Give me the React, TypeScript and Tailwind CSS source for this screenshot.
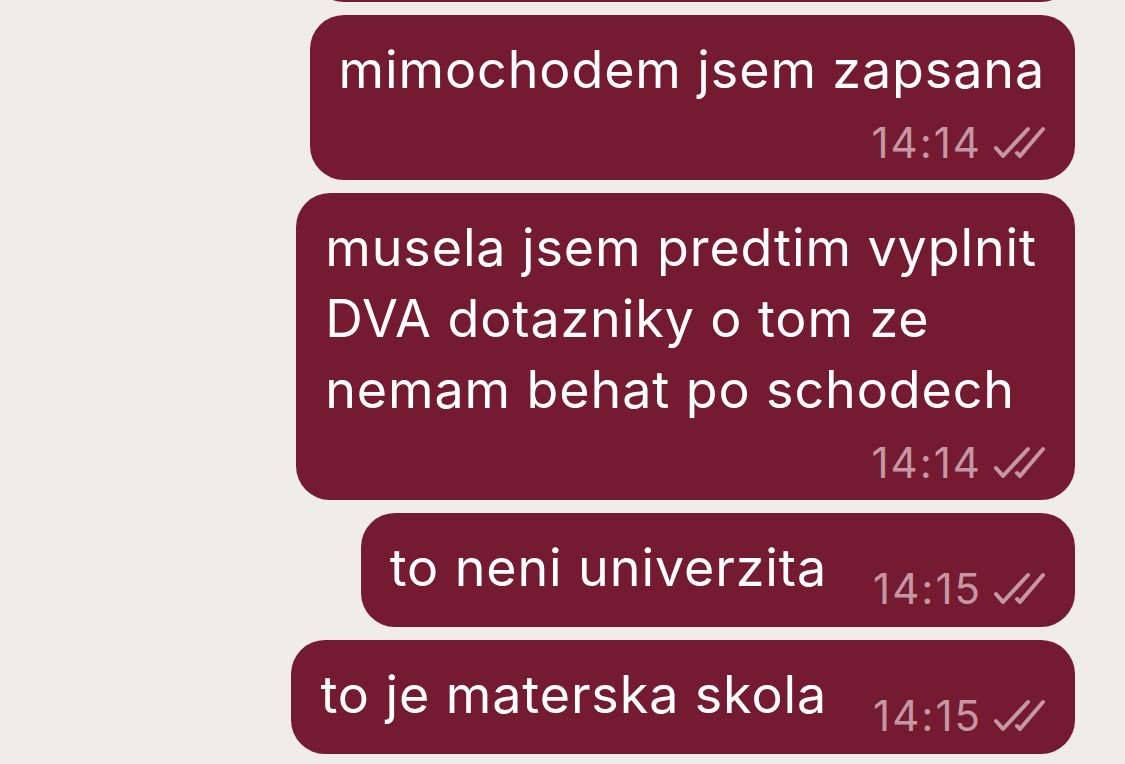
const TEXT_FONT = { fontFamily: "Inter, 'Noto Sans', sans-serif" };

function Checks() {
  return (
    <svg width="54" height="34" viewBox="0 0 54 34" fill="none" className="shrink-0">
      <path d="M5 22 L12 30 L37 3" stroke="currentColor" strokeWidth="4" strokeLinecap="round" strokeLinejoin="round" />
      <path d="M26 27 L29 30 L52 3" stroke="currentColor" strokeWidth="4" strokeLinecap="round" strokeLinejoin="round" />
    </svg>
  );
}

function Time({ t }: { t: string }) {
  return (
    <div className="flex h-[50px] shrink-0 items-center gap-[9px] text-[#c497a3]">
      <span className="text-[42px] leading-none tracking-[2px]">{t}</span>
      <Checks />
    </div>
  );
}

function Stacked({ lines, time, wide }: { lines: string[]; time: string; wide?: boolean }) {
  return (
    <div
      className={
        wide
          ? "flex flex-col rounded-[34px] bg-[#751b31] pl-[29px] pr-[38px] pt-[19px] pb-[12px]"
          : "flex flex-col rounded-[34px] bg-[#751b31] pl-[29px] pr-[30px] pt-[19px] pb-[12px]"
      }
    >
      <div className="text-[52px] leading-[71px] tracking-[0.9px] text-white">
        {lines.map((l) => (
          <div key={l}>{l}</div>
        ))}
      </div>
      <div className={wide ? "mt-[13px] -mr-[8px] self-end" : "mt-[13px] self-end"}>
        <Time t={time} />
      </div>
    </div>
  );
}

function Inline({ text, time }: { text: string; time: string }) {
  return (
    <div className="flex items-end gap-[46px] rounded-[34px] bg-[#751b31] pl-[29px] pr-[30px] pt-[19px] pb-[13px]">
      <div className="pb-[11px] text-[52px] leading-[71px] tracking-[0.9px] text-white">{text}</div>
      <Time t={time} />
    </div>
  );
}

export default function App() {
  return (
    <div className="h-[764px] w-[1125px] overflow-hidden bg-[#f0ede7]" style={TEXT_FONT}>
      <div className="flex flex-col items-end gap-[13px] pr-[50px]">
        <div className="-mt-[150px] h-[152px] w-[765px] rounded-[34px] bg-[#751b31]" />
        <Stacked lines={["mimochodem jsem zapsana"]} time="14:14" />
        <Stacked
          wide
          lines={["musela jsem predtim vyplnit", "DVA dotazniky o tom ze", "nemam behat po schodech"]}
          time="14:14"
        />
        <Inline text="to neni univerzita" time="14:15" />
        <Inline text="to je materska skola" time="14:15" />
      </div>
    </div>
  );
}
